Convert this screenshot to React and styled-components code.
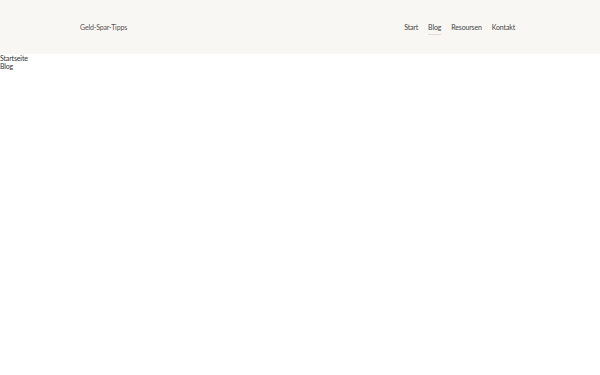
import React from "react";
import styled, { createGlobalStyle } from "styled-components";

const Global = createGlobalStyle`
  html, body { margin: 0; padding: 0; background: #fff; }
  body { font-family: "Lato", "Open Sans", sans-serif; color: #333; }
`;

const Header = styled.header`
  background: #f8f7f3;
  height: 54px;
  display: flex;
  align-items: center;
`;

const Container = styled.div`
  width: 440px;
  margin: 0 auto;
  display: flex;
  align-items: center;
  justify-content: space-between;
`;

const Brand = styled.a`
  font-size: 7px;
  letter-spacing: -0.15px;
  color: #5a534c;
  text-decoration: none;
`;

const Nav = styled.nav`
  display: flex;
  gap: 10px;
  margin-right: 5px;
`;

const NavLink = styled.a`
  font-size: 7px;
  letter-spacing: -0.15px;
  color: #454545;
  text-decoration: none;
  padding: 4px 0 3px;
  border-bottom: 1px solid ${(p) => (p.$active ? "#e2ded0" : "transparent")};
`;

const Crumbs = styled.ol`
  list-style: none;
  margin: 0;
  padding: 0;
  font-size: 7px;
  letter-spacing: -0.15px;
  line-height: 8px;
  color: #333;
`;

export default function App() {
  return (
    <>
      <Global />
      <Header>
        <Container>
          <Brand href="#">Geld-Spar-Tipps</Brand>
          <Nav>
            <NavLink href="#">Start</NavLink>
            <NavLink href="#" $active>Blog</NavLink>
            <NavLink href="#">Resoursen</NavLink>
            <NavLink href="#">Kontakt</NavLink>
          </Nav>
        </Container>
      </Header>
      <Crumbs>
        <li>Startseite</li>
        <li>Blog</li>
      </Crumbs>
    </>
  );
}
